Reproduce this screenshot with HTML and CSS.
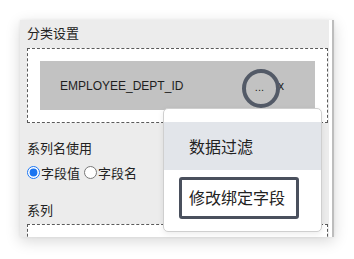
FILE: index.html
```html
<!DOCTYPE html>
<html lang="zh">
<head>
<meta charset="utf-8">
<link rel="stylesheet" href="styles.css">
</head>
<body>
<div class="stage">
  <div class="panel">
    <div class="content">
      <div class="label">分类设置</div>
      <div class="dropbox">
        <div class="field">
          <span class="field-name">EMPLOYEE_DEPT_ID</span>
          <span class="more">...</span>
          <span class="close">x</span>
          <span class="ring"></span>
        </div>
      </div>
      <div class="label gap-top">系列名使用</div>
      <div class="radios">
        <label class="radio"><input type="radio" name="sn" checked>字段值</label>
        <label class="radio"><input type="radio" name="sn">字段名</label>
      </div>
      <div class="label gap-top2">系列</div>
      <div class="dropbox second"></div>
    </div>
    <div class="scrollbar"><div class="thumb"></div></div>
  </div>
  <div class="menu">
    <div class="menu-item active">数据过滤</div>
    <div class="menu-item boxed">修改绑定字段</div>
  </div>
</div>
</body>
</html>
```
FILE: styles.css
```css
html, body {
  margin: 0;
  padding: 0;
  background: #ffffff;
}
body {
  width: 354px;
  height: 259px;
  overflow: hidden;
  font-family: "Liberation Sans", "Noto Sans CJK SC", sans-serif;
  color: #222;
}
.stage {
  position: relative;
  width: 354px;
  height: 259px;
  padding: 20px 0 0 20px;
  box-sizing: border-box;
}
.panel {
  width: 314px;
  height: 217px;
  background: #ececec;
  box-shadow: 0 4px 14px rgba(0, 0, 0, 0.16), 0 0 3px rgba(0, 0, 0, 0.06);
  display: flex;
  overflow: hidden;
}
.content {
  flex: 1;
  padding: 4px 1px 0 7px;
  overflow: hidden;
}
.label {
  font-family: "Noto Sans CJK SC", sans-serif;
  font-size: 13px;
  line-height: 18px;
  color: #222;
}
.label:first-child {
  margin-bottom: 6px;
}
.gap-top {
  margin-top: 16px;
}
.gap-top2 {
  margin-top: 20px;
  margin-bottom: 5px;
}
.dropbox {
  border: 1px dashed #5a5a5a;
  background: #ffffff;
  padding: 12px;
}
.dropbox.second {
  height: 40px;
}
.field {
  position: relative;
  height: 49px;
  background: #c2c2c2;
  display: flex;
  align-items: center;
  padding: 0 31px 0 20px;
  font-size: 12px;
  color: #1e1e1e;
}
.field-name {
  flex: 1;
}
.more {
  font-size: 11px;
  margin-top: 3px;
}
.close {
  margin-left: 14px;
  font-size: 12px;
}
.ring {
  position: absolute;
  left: 202px;
  top: 8px;
  width: 30px;
  height: 31px;
  border: 4px solid #535a67;
  border-radius: 50%;
}
.radios {
  display: flex;
  align-items: center;
  height: 18px;
  margin-top: 6px;
  font-family: "Noto Sans CJK SC", sans-serif;
  font-size: 13px;
}
.radio {
  display: flex;
  align-items: center;
  margin-right: 4px;
}
.radio input {
  margin: 0 1px 0 0;
  width: 13px;
  height: 13px;
  accent-color: #1a74f0;
}
.scrollbar {
  width: 5px;
  background: #ffffff;
  display: flex;
  justify-content: flex-end;
}
.thumb {
  width: 2px;
  background: #bdbdbd;
}
.menu {
  position: absolute;
  left: 163px;
  top: 108px;
  width: 157px;
  height: 109px;
  padding-top: 13px;
  box-sizing: content-box;
  background: #ffffff;
  border: 1px solid #cfcfcf;
  border-radius: 5px;
  box-shadow: 0 2px 6px rgba(0, 0, 0, 0.08);
  font-family: "Noto Sans CJK SC", sans-serif;
  font-size: 16px;
  color: #222;
}
.menu-item {
  display: flex;
  align-items: center;
  padding-left: 25px;
  height: 48px;
}
.menu-item.active {
  background: #e2e5ea;
}
.menu-item.boxed {
  margin: 7px 0 0 15px;
  width: 107px;
  height: 34px;
  padding: 0 0 2px 7px;
  border: 3px solid #4a505d;
  border-radius: 3px;
  box-sizing: content-box;
}
```
